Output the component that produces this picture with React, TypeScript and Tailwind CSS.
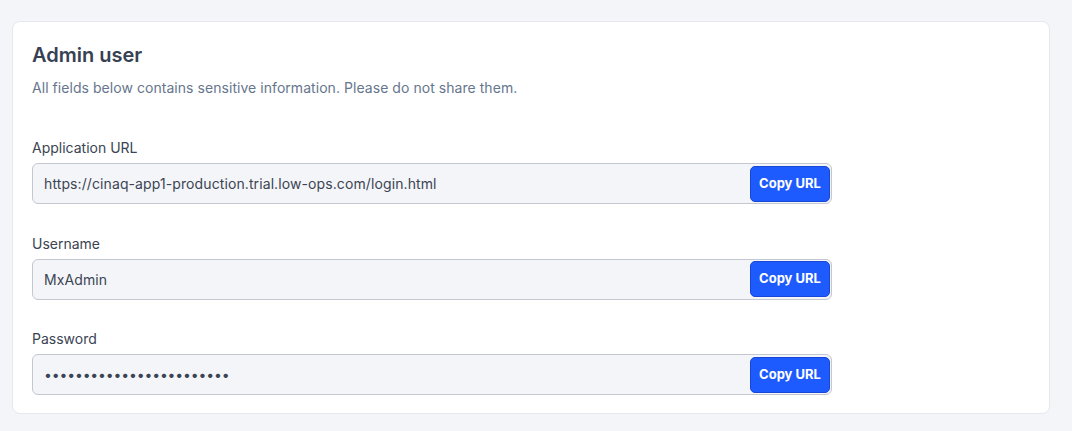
import React from "react";

function Field({ label, value, pw }: { label: string; value: string; pw?: boolean }) {
  return (
    <div className="flex flex-col">
      <label className="text-[14px] leading-5 text-[#3b4453]">{label}</label>
      <div className="mt-[5px] flex h-[41px] w-[800px] items-center justify-between rounded-[6px] border border-[#c3c7cf] bg-[#f4f5f9] pl-[11px] pr-[1px]">
        <span className={pw ? "text-[14px] tracking-[-0.15px] text-[#3b4453]" : "text-[14px] tracking-[0.1px] text-[#3b4453]"}>{value}</span>
        <button className="h-[36px] w-[80px] rounded-[5px] border border-[#1846d6] bg-[#1d5bff] text-[13px] font-bold text-white">
          Copy URL
        </button>
      </div>
    </div>
  );
}

export default function App() {
  return (
    <div className="min-h-[431px] w-[1072px] bg-[#f4f5f9] pl-[12px] pt-[21px]" style={{ fontFamily: "Inter, 'Noto Sans', sans-serif" }}>
      <div className="w-[1038px] rounded-[8px] border border-[#e6e8ee] bg-white px-[19px] pb-[18px] pt-[19px]">
        <h2 className="text-[20px] font-semibold leading-7 text-[#364152]">Admin user</h2>
        <p className="mt-[9px] text-[14px] leading-5 tracking-[0.05px] text-[#66768d]">
          All fields below contains sensitive information. Please do not share them.
        </p>
        <div className="mt-[40px] flex flex-col gap-[29.5px]">
          <Field label="Application URL" value="https://cinaq-app1-production.trial.low-ops.com/login.html" />
          <Field label="Username" value="MxAdmin" />
          <Field label="Password" value="••••••••••••••••••••••••" pw />
        </div>
      </div>
    </div>
  );
}
